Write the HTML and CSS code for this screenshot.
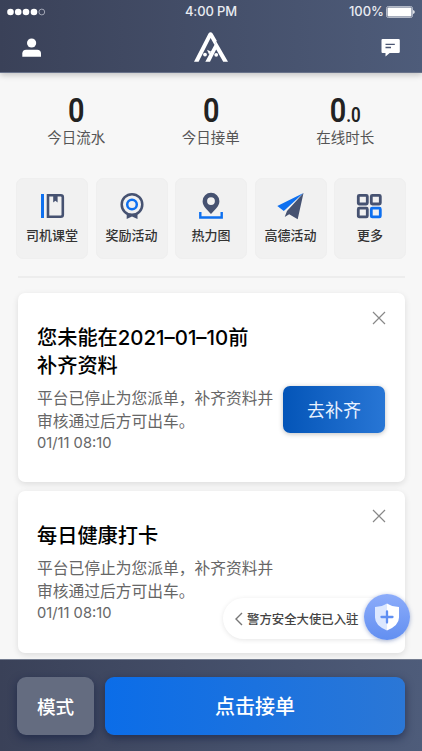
FILE: index.html
```html
<!DOCTYPE html>
<html lang="zh-CN">
<head>
<meta charset="utf-8">
<title>司机首页</title>
<link rel="stylesheet" href="styles.css">
</head>
<body>
<div class="app">
  <header class="header">
    <div class="status">
      <svg class="signal" width="40" height="8" viewBox="0 0 40 8"><g fill="#fff"><circle cx="3.5" cy="4" r="3.3"/><circle cx="11.2" cy="4" r="3.3"/><circle cx="19" cy="4" r="3.3"/><circle cx="27" cy="4" r="3.3"/></g><circle cx="34.8" cy="4" r="2.9" fill="none" stroke="#b9bdc9" stroke-width=".8"/></svg>
      <span class="clock">4:00 PM</span>
      <span class="battery">100%<svg width="29" height="12" viewBox="0 0 29 12"><rect x=".5" y=".5" width="26" height="11" rx="1.8" fill="none" stroke="#cdd2dc" stroke-width=".8"/><rect x="1.5" y="1.5" width="24" height="9" rx="1" fill="#fff"/><path d="M27.2 4v4q1.5-.6 1.5-2t-1.5-2" fill="#fff"/></svg></span>
    </div>
    <nav class="topnav">
      <svg width="20" height="20" viewBox="0 0 20 20" fill="#fff"><circle cx="9.6" cy="5" r="4.6"/><path d="M.3 18.8v-3.3Q.3 11.7 4.2 11.7h10.9q3.9 0 3.9 3.8v3.3z"/></svg>
      <svg class="logo" width="34" height="30" viewBox="0 0 34 30" fill="#fff"><path d="M0 29.800L14.500 1.500Q16.500-1 18.600 1.500L22.800 8.800 20.500 13 16.600 6 4.600 29.800z"/><path d="M11.300 29.800L22.300 9.500 34 29.800h-4.800L22.200 17.500 16 29.800z"/><circle cx="11" cy="22.600" r="1.900"/><path d="M13 17.800l4 1.800-1.800 3.200z"/><circle cx="22.200" cy="22.800" r="1.900"/></svg>
      <svg width="20" height="20" viewBox="0 0 20 20"><path d="M1.500 1h16q1.300 0 1.300 1.300v11.400q0 1.300-1.300 1.300H8.700l-4.200 3.600V15h-3Q.5 15 .5 13.7V2.300Q.5 1 1.500 1z" fill="#fff"/><path d="M4.500 6.300h9.300M4.500 9.500h5.500" stroke="#4a5672" stroke-width="1.300"/></svg>
    </nav>
  </header>

  <main class="main">
    <section class="stats">
      <div class="stat"><div class="num">0</div><div class="cap">今日流水</div></div>
      <div class="stat"><div class="num">0</div><div class="cap">今日接单</div></div>
      <div class="stat"><div class="num">0<small>.0</small></div><div class="cap">在线时长</div></div>
    </section>

    <section class="tools">
      <div class="tool"><svg viewBox="0 0 28 28"><path d="M4.500 2v24" stroke="#0e70f0" stroke-width="3"/><path d="M10 3.300h12.800q2 0 2 2v17.400q0 2-2 2H10z" fill="none" stroke="#465271" stroke-width="2.600"/><path d="M15.200 3v7.500l2.200-1.700 2.200 1.700V3z" fill="#465271"/></svg>司机课堂</div>
      <div class="tool"><svg viewBox="0 0 28 28"><path d="M8.700 20v7l5.300-2.600 5.500 2.600v-7z" fill="#465271"/><circle cx="14" cy="12.500" r="10.300" fill="#f1f1f1" stroke="#465271" stroke-width="2.500"/><circle cx="14" cy="12.500" r="4.800" fill="none" stroke="#0e70f0" stroke-width="2.500"/></svg>奖励活动</div>
      <div class="tool"><svg viewBox="0 0 28 28"><path fill-rule="evenodd" d="M14 .8a8.400 8.400 0 0 1 8.400 8.400C22.400 14.500 17 18.500 14 22 11 18.500 5.600 14.500 5.600 9.200A8.400 8.400 0 0 1 14 .8zm0 4.400a3.900 3.900 0 1 0 0 7.800 3.900 3.900 0 0 0 0-7.800z" fill="#465271"/><path d="M3.300 20v5.500h21.400V20" fill="none" stroke="#0e70f0" stroke-width="2.400"/></svg>热力图</div>
      <div class="tool"><svg viewBox="0 0 28 28"><path d="M26.500 1L.3 14l6.500 5z" fill="#0e70f0"/><path d="M26.500 1L10 19 7.700 25l4.500-2.800 8.500 5z" fill="#465271"/></svg>高德活动</div>
      <div class="tool"><svg viewBox="0 0 28 28" fill="none" stroke="#465271" stroke-width="2.800"><rect x="2.300" y="3.300" width="9" height="8.700" rx="1"/><rect x="15.300" y="3.300" width="9" height="8.700" rx="1"/><rect x="2.300" y="16.200" width="9" height="8.700" rx="1"/><rect x="15.300" y="16.200" width="9" height="8.700" rx="1" stroke="#0e70f0"/></svg>更多</div>
    </section>
    <div class="rule"></div>

    <article class="card card-first">
      <svg class="close" viewBox="0 0 14 14"><path d="M1 1l12 12M13 1L1 13"/></svg>
      <h2>您未能在<span class="date">2021–01–10</span>前<br>补齐资料</h2>
      <p>平台已停止为您派单，补齐资料并<br>审核通过后方可出车。</p>
      <time>01/11 08:10</time>
      <button class="fill">去补齐</button>
    </article>

    <article class="card card-second">
      <svg class="close" viewBox="0 0 14 14"><path d="M1 1l12 12M13 1L1 13"/></svg>
      <h2>每日健康打卡</h2>
      <p>平台已停止为您派单，补齐资料并<br>审核通过后方可出车。</p>
      <time>01/11 08:10</time>
    </article>
  </main>

  <div class="police">
    <svg class="back" viewBox="0 0 8 14"><path d="M7 1L1 7l6 6"/></svg>
    <span>警方安全大使已入驻</span>
    <div class="shield"><svg width="26" height="28" viewBox="0 0 26 28"><path d="M13 .5Q8.500 3.500 1 4v10.500Q1 22.500 13 27.500z" fill="#dce8ff"/><path d="M13 .5Q17.500 3.500 25 4v10.500Q25 22.500 13 27.500z" fill="#fff"/><path d="M13 8.500v11M7.500 14h11" stroke="#5f8ff2" stroke-width="2.300" stroke-linecap="round"/></svg></div>
  </div>

  <footer class="footer">
    <button class="mode">模式</button>
    <button class="accept">点击接单</button>
  </footer>
</div>
</body>
</html>
```

FILE: styles.css
```css
* { box-sizing: border-box; }
body { margin: 0; font-family: "Liberation Sans", "Noto Sans CJK SC", sans-serif; background: #f7f7f7; }
svg { display: block; flex: none; }
button { border: 0; padding: 0; font-family: inherit; color: #fff; }
.app { position: relative; width: 422px; height: 751px; overflow: hidden; display: flex; flex-direction: column; }
.header { height: 73px; flex: none; background: linear-gradient(90deg, #3a4158, #4e5c7a); border-bottom: 1px solid #68728a; box-shadow: 0 2px 6px rgba(0,0,0,.22); color: #fff; }
.status { height: 23px; padding: 0 7px; display: grid; grid-template-columns: 1fr auto 1fr; align-items: center; }
.clock { font: 500 13px/15px Inter, sans-serif; color: #e9ebf1; letter-spacing: -.1px; }
.battery { display: flex; justify-content: flex-end; align-items: center; gap: 2px; font: 500 13px/15px Inter, sans-serif; color: #e9ebf1; }
.topnav { height: 48px; padding: 2px 21px 0 22px; display: flex; justify-content: space-between; align-items: center; }
.logo { margin: 0 2px 2px 0; }
.main { flex: 1; min-height: 0; padding: 21px 17px 0 18px; }
.stats { display: grid; grid-template-columns: repeat(3, 134.5px); margin-left: -9px; height: 84px; text-align: center; }
.num { font: 600 34px/32px Roboto, sans-serif; height: 34px; color: #222; transform: scaleX(.85); }
.num small { font-size: 20px; }
.cap { font-size: 14.5px; line-height: 21px; color: #555; }
.tools { display: grid; grid-template-columns: repeat(5, 72px); justify-content: space-between; height: 81px; margin: 0 -1px 0 -2px; }
.tool { height: 81px; border-radius: 7px; background: #f1f1f1; padding-top: 13px; display: flex; flex-direction: column; align-items: center; color: #333; font-size: 13px; font-weight: 500; line-height: 19px; border: 1px solid #efefef; }
.tool svg { width: 28px; height: 28px; margin-bottom: 6px; }
.rule { height: 2px; background: #ededed; margin: 17px 0 15px; }
.card { position: relative; background: #fff; border-radius: 7px; padding: 31px 19px 0; box-shadow: 0 2px 6px rgba(0,0,0,.11); }
.card-first { height: 189px; }
.card-second { height: 162px; margin-top: 9px; }
.card h2 { margin: 0; font-size: 20.2px; line-height: 28px; font-weight: 500; color: #000; }
.date { font-family: Inter, sans-serif; font-weight: 500; font-size: 20.4px; }
.card p { margin: 8px 0 0; font-size: 15.75px; line-height: 22.5px; color: #666; white-space: nowrap; }
.card time { display: block; font: 14.7px/20px Inter, sans-serif; color: #666; }
.close { position: absolute; right: 19.5px; top: 18px; width: 14px; height: 14px; fill: none; stroke: #888; stroke-width: 1.2; }
.fill { position: absolute; right: 20px; top: 93px; width: 102px; height: 47px; padding-bottom: 2px; border-radius: 7px; background: linear-gradient(90deg, #0455b8, #2876d5); font-size: 18px; color: #e8f1ff; box-shadow: 0 1px 5px rgba(0,0,0,.25); }
.police { position: absolute; left: 223px; top: 598px; width: 180px; height: 41px; border-radius: 21px; background: #fff; box-shadow: 0 1px 5px rgba(0,0,0,.1); display: flex; align-items: center; padding-left: 12px; font-size: 12.4px; font-weight: 500; color: #444; white-space: nowrap; }
.back { width: 8px; height: 14px; fill: none; stroke: #777; stroke-width: 1.4; margin-right: 4px; }
.shield { position: absolute; left: 141px; top: -4px; width: 46px; height: 46px; border-radius: 50%; background: linear-gradient(#8cacfa, #628ff1); box-shadow: 0 1px 4px rgba(50,80,160,.4); display: flex; align-items: center; justify-content: center; }
.footer { height: 92px; flex: none; position: relative; display: flex; gap: 11px; padding: 17px 17px 0; background: linear-gradient(90deg, #3a4158, #4e5c7a); border-top: 1px solid #747d90; }
.footer button { height: 58px; padding-bottom: 2px; border-radius: 9px; font-size: 20px; font-weight: 500; box-shadow: 0 3px 9px rgba(16,28,64,.6); }
.footer .mode { width: 77px; background: #646c80; font-size: 18.6px; }
.accept { flex: 1; background: linear-gradient(90deg, #0b6de8, #2b77d6); }
```
